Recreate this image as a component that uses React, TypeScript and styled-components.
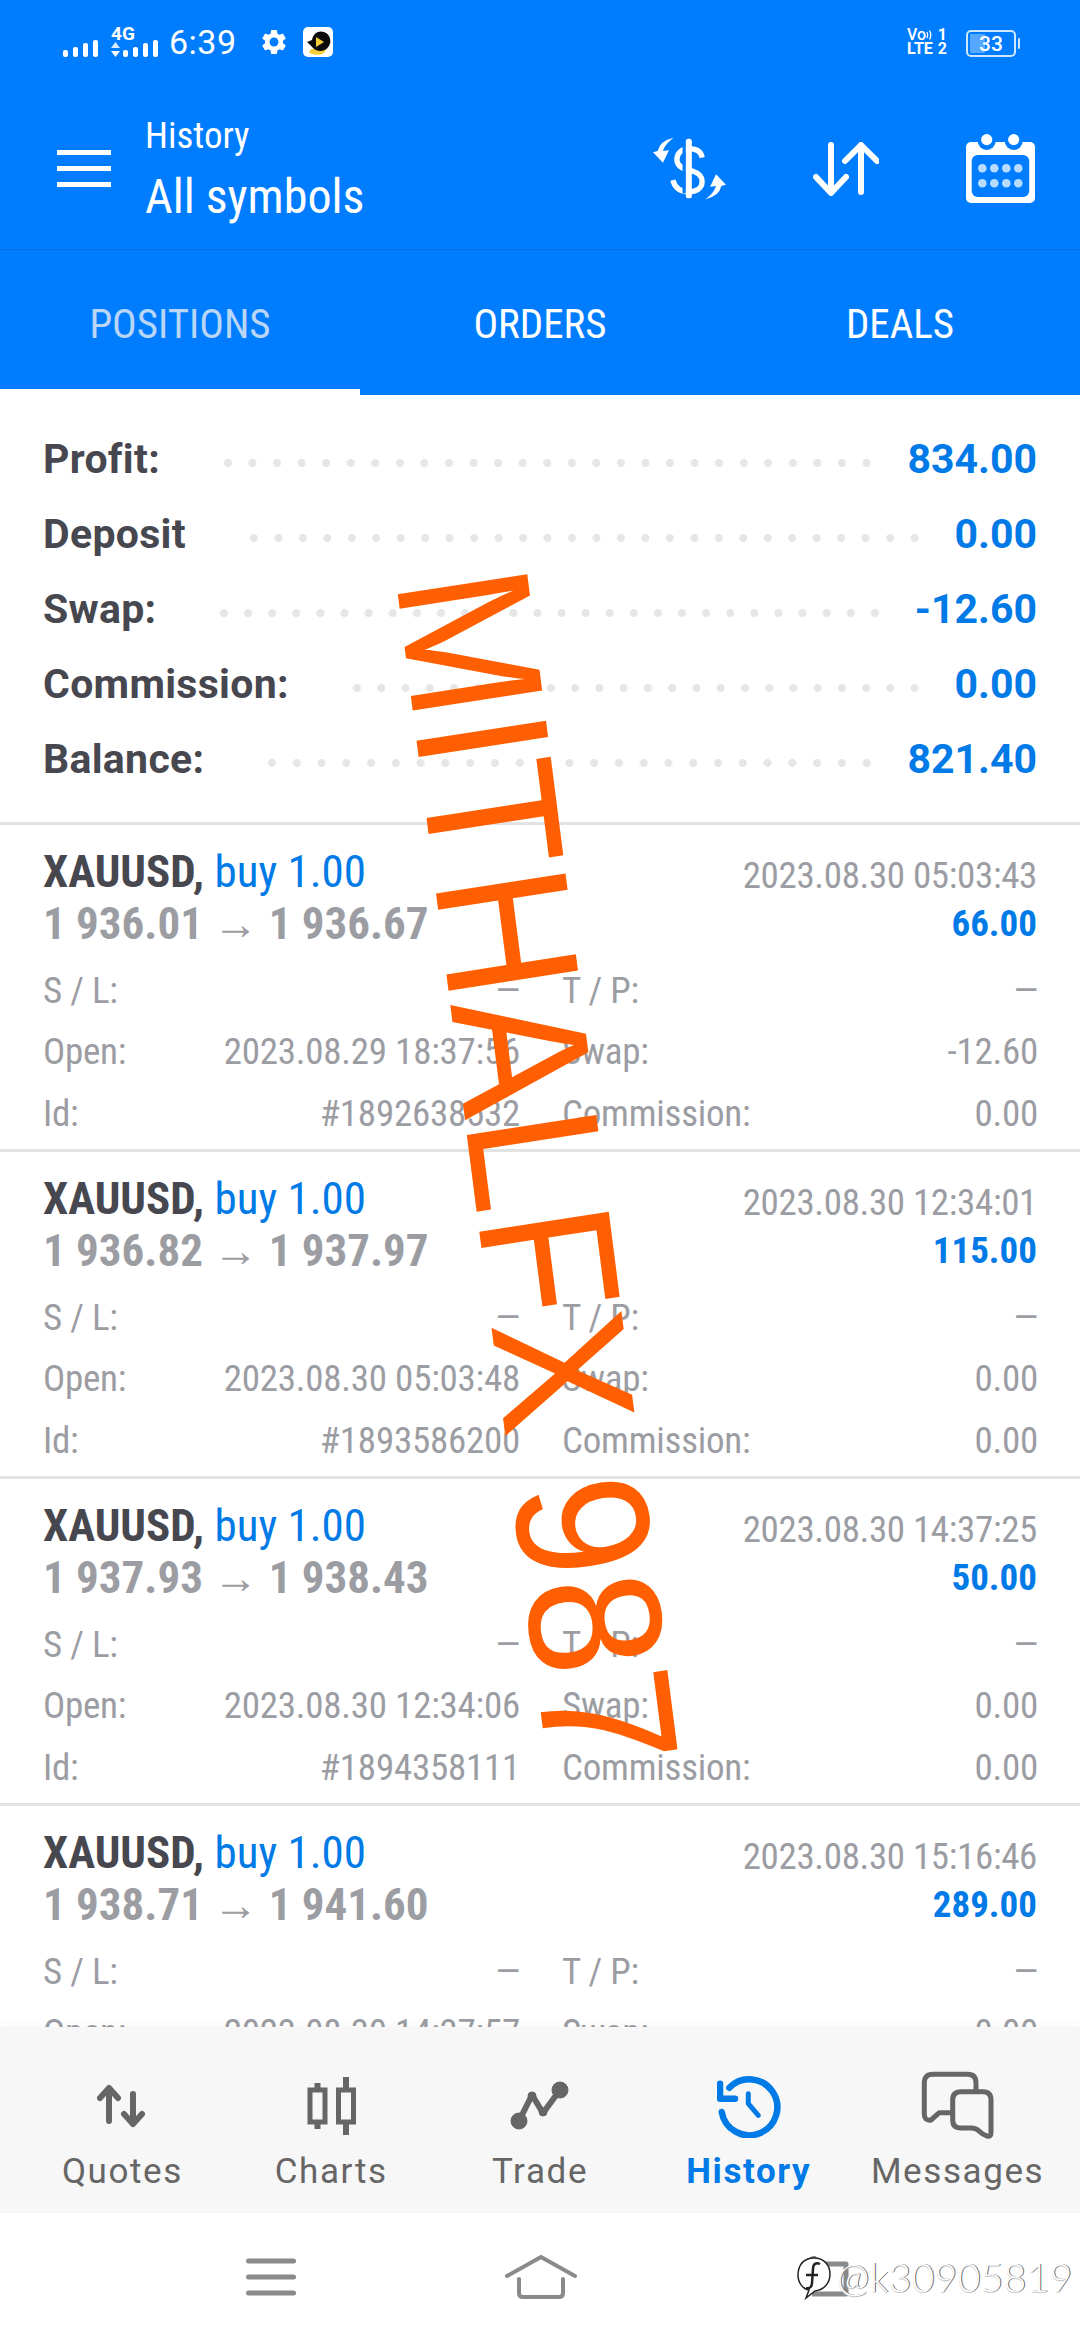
import React from "react";
import styled, { createGlobalStyle, css } from "styled-components";
import { MdSettings } from "react-icons/md";

const BLUE = "#007dff";
const VALUE_BLUE = "#007ae6";
const DARK = "#47474f";
const GREY = "#9c9da3";
const ICON_GREY = "#666666";

const GlobalStyle = createGlobalStyle`
  html, body {
    margin: 0;
    padding: 0;
    background: #fff;
  }
  body {
    font-family: Roboto, "Liberation Sans", sans-serif;
  }
`;

const condensed = css`
  font-family: "Roboto Condensed", Roboto, sans-serif;
  font-stretch: condensed;
`;

const Page = styled.div`
  position: relative;
  width: 1080px;
  height: 2340px;
  display: flex;
  flex-direction: column;
  overflow: hidden;
  background: #fff;
`;

const Header = styled.header`
  background: ${BLUE};
  color: #fff;
`;

const StatusBar = styled.div`
  height: 88px;
  padding: 27px 60px 0 63px;
  box-sizing: border-box;
  display: flex;
  justify-content: space-between;
  align-items: flex-start;
`;

const StatusGroup = styled.div`
  display: flex;
  align-items: flex-end;
  height: 30px;
`;

const NetStack = styled.div`
  display: flex;
  flex-direction: column;
  margin: 0 11px 0 13px;
`;

const NetLabel = styled.span`
  font-size: 19px;
  line-height: 13px;
  font-weight: 700;
`;

const NetBars = styled.div`
  display: flex;
  align-items: flex-end;
  gap: 3px;
`;

const Clock = styled.span`
  font-size: 34px;
  line-height: 30px;
  letter-spacing: 0.5px;
  margin-right: 24px;
`;

const Gear = styled(MdSettings)`
  margin: 0 14px 0 -2px;
`;

const Volte = styled.div`
  width: 40px;
  margin: 0 19px 1px 0;
  display: flex;
  flex-direction: column;
  font-size: 16px;
  line-height: 14px;
  font-weight: 700;
`;

const VolteLine = styled.div`
  display: flex;
  align-items: center;
  justify-content: space-between;
`;

const VolteVo = styled.span`
  display: flex;
  align-items: center;
  font-weight: 500;
`;

const Battery = styled.div`
  position: relative;
  width: 50px;
  height: 27px;
  box-sizing: border-box;
  border: 2px solid #cfe6ff;
  border-radius: 5px;
  display: flex;
  align-items: center;
  justify-content: center;
  font-size: 21px;
  font-weight: 500;
  background: linear-gradient(90deg, #55a8ff 0 36%, transparent 36%);
  background-clip: content-box;
  padding: 2px;
  margin-right: 4px;

  &::after {
    content: "";
    position: absolute;
    right: -6px;
    top: 6px;
    width: 2px;
    height: 11px;
    border-radius: 1px;
    background: #cfe6ff;
  }
`;

const Toolbar = styled.div`
  height: 162px;
  box-sizing: border-box;
  border-bottom: 1px solid #0a70e0;
  display: flex;
  align-items: center;
  padding: 0 45px 0 57px;
`;

const Burger = styled.div`
  width: 54px;
  height: 37px;
  display: flex;
  flex-direction: column;
  justify-content: space-between;
  margin-right: 34px;

  span {
    height: 5px;
    background: #fff;
  }
`;

const Titles = styled.div`
  flex: 1;
  display: flex;
  flex-direction: column;
  padding-top: 4px;
`;

const SubTitle = styled.div`
  ${condensed}
  font-size: 37px;
  line-height: 44px;
`;

const MainTitle = styled.div`
  ${condensed}
  font-size: 48px;
  line-height: 62px;
  margin-top: 8px;
`;

const ToolIcons = styled.div`
  display: flex;
  align-items: center;
  gap: 87px;
`;

const Tabs = styled.div`
  height: 145px;
  display: grid;
  grid-template-columns: repeat(3, 1fr);
`;

const TabButton = styled.div<{ $active?: boolean }>`
  ${condensed}
  display: flex;
  align-items: center;
  justify-content: center;
  box-sizing: border-box;
  padding-top: 9px;
  font-size: 41px;
  color: ${(p) => (p.$active ? "#b9d6f7" : "#fff")};
  border-bottom: 6px solid ${(p) => (p.$active ? "#fff" : "transparent")};
`;

const Content = styled.main`
  flex: 1;
  min-height: 0;
  overflow: hidden;
`;

const Summary = styled.section`
  padding: 26px 43px 26px;
  border-bottom: 3px solid #e3e3e3;
`;

const SummaryRow = styled.div`
  height: 75px;
  display: flex;
  align-items: center;
`;

const SummaryLabel = styled.span`
  font-size: 41px;
  font-weight: 700;
  letter-spacing: 0.3px;
  color: ${DARK};
`;

const Leader = styled.span`
  flex: 1;
  height: 8px;
  margin: 8px 28px 0 56px;
  background-image: radial-gradient(circle, #e6e6e6 3.8px, transparent 4.2px);
  background-size: 24px 8px;
  background-repeat: space no-repeat;
`;

const SummaryValue = styled.span`
  font-size: 41px;
  font-weight: 700;
  color: ${VALUE_BLUE};
`;

const Deal = styled.article`
  height: 327px;
  box-sizing: border-box;
  padding: 22px 43px 0;
  border-bottom: 3px solid #e3e3e3;
`;

const DealHead = styled.div`
  display: flex;
  justify-content: space-between;
`;

const PriceLine = styled(DealHead)`
  margin-top: -4px;
`;

const Symbol = styled.div`
  ${condensed}
  font-size: 45px;
  line-height: 50px;
  font-weight: 700;
  color: ${DARK};

  span {
    font-weight: 400;
    color: ${VALUE_BLUE};
  }
`;

const CloseTime = styled.div`
  ${condensed}
  font-size: 37px;
  letter-spacing: -0.35px;
  line-height: 52px;
  margin-top: 3px;
  color: ${GREY};
`;

const Prices = styled.div`
  ${condensed}
  font-size: 45px;
  line-height: 52px;
  font-weight: 700;
  color: ${GREY};
`;

const DealProfit = styled.div`
  ${condensed}
  font-size: 37px;
  line-height: 52px;
  font-weight: 700;
  color: ${VALUE_BLUE};
`;

const DealGrid = styled.div`
  display: grid;
  grid-template-columns: 477px 476px;
  column-gap: 42px;
  margin-top: 10px;
`;

const DealField = styled.div`
  ${condensed}
  height: 61.3px;
  display: flex;
  align-items: center;
  justify-content: space-between;
  font-size: 37px;
  letter-spacing: -0.25px;
  color: ${GREY};
`;

const TabBar = styled.nav`
  height: 186px;
  flex: none;
  box-sizing: border-box;
  padding: 43px 18px 0;
  display: grid;
  grid-template-columns: repeat(5, 1fr);
  background: #f7f7f7;
  box-shadow: 0 -5px 7px rgba(0, 0, 0, 0.02);
  position: relative;
`;

const TabItem = styled.div<{ $active?: boolean }>`
  display: flex;
  flex-direction: column;
  align-items: center;
  font-size: 35px;
  line-height: 44px;
  letter-spacing: 1.6px;
  font-weight: ${(p) => (p.$active ? 700 : 400)};
  color: ${(p) => (p.$active ? VALUE_BLUE : ICON_GREY)};
`;

const TabIcon = styled.div`
  height: 72px;
  display: flex;
  align-items: center;
  justify-content: center;
  margin-bottom: 8px;
`;

const NavBar = styled.div`
  height: 127px;
  flex: none;
  display: flex;
  align-items: center;
  gap: 209px;
  padding-left: 246px;
  background: #fff;
`;

const BackSlot = styled.div`
  display: flex;
  margin-left: 14px;
`;

const Stamp = styled.div`
  position: absolute;
  left: 796px;
  top: 2252px;
  display: flex;
  align-items: center;
  gap: 5px;
  font-family: Lato, Roboto, sans-serif;
  font-size: 39px;
  font-weight: 300;
  letter-spacing: 0.4px;
  line-height: 50px;
  color: #fff;
  text-shadow: 1px 0 0 #666, 0 1px 0 #ccc;
`;

const Brand = styled.div`
  position: absolute;
  left: 396px;
  top: 580px;
  line-height: 0;
  white-space: nowrap;
  font-family: "Liberation Sans", Arial, sans-serif;
  font-size: 190px;
  color: #ff5f00;
  transform-origin: 0 0;
  transform: scaleY(1.1) rotate(82deg) scaleX(0.84) translateY(-66px);
`;

const SignalBars = () => (
  <svg width="35" height="17" viewBox="0 0 35 17" fill="#fff">
    <rect x="0" y="10" width="5" height="7" rx="2" />
    <rect x="10" y="7" width="5" height="10" rx="2" />
    <rect x="20" y="3" width="5" height="14" rx="2" />
    <rect x="30" y="0" width="5" height="17" rx="2" />
  </svg>
);

const DataArrows = () => (
  <svg width="9" height="15" viewBox="0 0 9 15" fill="#fff">
    <path d="M4.5 0 9 6H0z" opacity="0.85" />
    <path d="M0 9h9l-4.5 6z" />
  </svg>
);

const VoiceWaves = () => (
  <svg width="7" height="14" viewBox="0 0 7 14" fill="none" stroke="#fff" strokeWidth="1.3">
    <path d="M1 4q1.500 3 0 6M3.500 2.500q2.500 4.500 0 9" />
  </svg>
);

const AppBadge = () => (
  <svg width="30" height="30" viewBox="0 0 30 30">
    <rect width="30" height="30" rx="5" fill="#fff" />
    <path d="M6 25c2 3 10 4 15 1l3-5-16 1z" fill="#f5cf3a" />
    <path d="M4 15 9 13C10 6 16 3 21 5c6 2 8 9 5 14-3 5-9 6-13 4-3-1-5-5-9-8z" fill="#0b0b0b" />
    <path d="M13 10v10l8-5z" fill="#f5cf3a" />
  </svg>
);

const DollarSwapIcon = () => (
  <svg width="73" height="63" viewBox="0 0 220 190" fill="#fff">
    <path d="M62 2Q20 12 14 42L0 46 30 78 48 40 30 42Q35 22 62 2z" />
    <path d="M158 188Q200 178 206 148L220 144 190 112 172 150 190 148Q185 168 158 188z" />
    <path
      d="M148 62C145 42 128 35 108 35 85 35 72 50 72 68 72 85 85 95 108 100 135 106 148 115 148 135 148 155 130 165 108 165 85 165 66 155 60 130"
      fill="none"
      stroke="#fff"
      strokeWidth="16"
    />
    <rect x="89" y="20" width="10" height="150" fill={BLUE} />
    <rect x="99" y="5" width="18" height="180" rx="8" />
  </svg>
);

const SwapArrowsIcon = () => (
  <svg width="66" height="54" viewBox="0 0 66 54" fill="none" stroke="#fff" strokeWidth="6" strokeLinecap="round" strokeLinejoin="round">
    <path d="M18 3v47M3 35l15 16 15-16" />
    <path d="M48 3v47M32 19 48 3l16 16" />
  </svg>
);

const CalendarIcon = () => (
  <svg width="69" height="69" viewBox="0 0 69 69">
    <rect x="0" y="8" width="69" height="61" rx="5" fill="#fff" />
    <circle cx="20.7" cy="7" r="9" fill={BLUE} />
    <circle cx="47.7" cy="7" r="9" fill={BLUE} />
    <circle cx="20.7" cy="5.6" r="5.6" fill="#fff" />
    <circle cx="47.7" cy="5.6" r="5.6" fill="#fff" />
    <rect x="5.7" y="21" width="57.5" height="42" rx="6" fill={BLUE} />
    {[34.3, 49.3].map((y) =>
      [16.3, 28.3, 40.3, 52.3].map((x) => <circle key={`${x}-${y}`} cx={x} cy={y} r="4.3" fill="#b8dcff" />),
    )}
  </svg>
);

const QuotesIcon = () => (
  <svg width="50" height="44" viewBox="0 0 50 44" fill="none" stroke={ICON_GREY} strokeWidth="6" strokeLinecap="round" strokeLinejoin="round">
    <path d="M12 4v33M3 14l9-10 9 10" />
    <path d="M36 10v30M27 30l9 10 9-10" />
  </svg>
);

const ChartsIcon = () => (
  <svg width="49" height="58" viewBox="0 0 49 58" fill="none" stroke={ICON_GREY}>
    <path d="M10.500 6v46M39 0v58" strokeWidth="6" />
    <rect x="3" y="13" width="15" height="32" fill="#f7f7f7" strokeWidth="5" />
    <rect x="31.500" y="13" width="15" height="32" fill="#f7f7f7" strokeWidth="5" />
  </svg>
);

const TradeIcon = () => (
  <svg width="60" height="50" viewBox="0 0 60 50" fill={ICON_GREY} stroke={ICON_GREY}>
    <path d="M9 40 22 14 33 32 50 9" fill="none" strokeWidth="6" strokeLinejoin="round" />
    <circle cx="9" cy="40" r="8" />
    <circle cx="22" cy="15" r="4" />
    <circle cx="33" cy="31" r="4" />
    <circle cx="50" cy="9" r="8" />
  </svg>
);

const HistoryIcon = () => (
  <svg width="64" height="64" viewBox="0 0 64 64" fill="none" stroke={VALUE_BLUE} strokeWidth="6.500" strokeLinecap="round" strokeLinejoin="round">
    <path d="M4.700 38A28 28 0 1 0 12.300 13.700" />
    <path d="M3 9.700v15h15" />
    <path d="M31.300 19.700v10l10 11.600" strokeWidth="5" />
  </svg>
);

const MessagesIcon = () => (
  <svg width="74" height="70" viewBox="0 0 74 70" fill="none" stroke={ICON_GREY} strokeWidth="5" strokeLinejoin="round" strokeLinecap="round">
    <path d="M55 19V12Q55 3.300 46.700 3.300H11.700Q3.300 3.300 3.300 11.700V43Q3.300 50 10 49L18.300 41.700H31.700" />
    <path d="M40 20.700H62Q70 20.700 70 29V62Q70 66 66 65 62 64 58 60 55 57 50 57H40Q31.700 57 31.700 49V29Q31.700 20.700 40 20.700Z" />
  </svg>
);

const NavMenuIcon = () => (
  <svg width="50" height="38" viewBox="0 0 50 38" fill="none" stroke="#8a8a8a" strokeWidth="5" strokeLinecap="round">
    <path d="M2.500 3h45M2.500 19h45M2.500 35h45" />
  </svg>
);

const NavHomeIcon = () => (
  <svg width="72" height="44" viewBox="0 0 72 44" fill="none" stroke="#8a8a8a" strokeWidth="4" strokeLinecap="round" strokeLinejoin="round">
    <path d="M2 21 36 2l34 19" />
    <path d="M14 24v14q0 4 4 4h36q4 0 4-4V24" />
  </svg>
);

const NavBackIcon = () => (
  <svg width="50" height="42" viewBox="0 0 50 42" fill="none" stroke="#8a8a8a" strokeWidth="5" strokeLinejoin="round">
    <path d="M3 8 14 2v12zM14 8h32v30H12" />
  </svg>
);

const StampLogo = () => (
  <svg width="36" height="48" viewBox="0 0 36 48" fill="none" stroke="#222" strokeWidth="1.500">
    <path d="M18 5C8 5 2 12 2 22c0 8 5 14 11 15l-3 8 9-7c9-1 15-8 15-17C34 12 28 5 18 5z" fill="#fff" />
    <path d="M24 11c-4-2-7 0-7 5l-1 14c0 4-3 6-6 5M10 22h12" strokeWidth="2.500" />
  </svg>
);

type Deal = {
  close: string;
  prices: [string, string];
  profit: string;
  open: string;
  swap: string;
  id: string;
};

const deals: Deal[] = [
  { close: "2023.08.30 05:03:43", prices: ["1 936.01", "1 936.67"], profit: "66.00", open: "2023.08.29 18:37:56", swap: "-12.60", id: "#1892638532" },
  { close: "2023.08.30 12:34:01", prices: ["1 936.82", "1 937.97"], profit: "115.00", open: "2023.08.30 05:03:48", swap: "0.00", id: "#1893586200" },
  { close: "2023.08.30 14:37:25", prices: ["1 937.93", "1 938.43"], profit: "50.00", open: "2023.08.30 12:34:06", swap: "0.00", id: "#1894358111" },
  { close: "2023.08.30 15:16:46", prices: ["1 938.71", "1 941.60"], profit: "289.00", open: "2023.08.30 14:37:57", swap: "0.00", id: "#1894358112" },
];

const totals = [
  ["Profit:", "834.00"],
  ["Deposit", "0.00"],
  ["Swap:", "-12.60"],
  ["Commission:", "0.00"],
  ["Balance:", "821.40"],
];

const tabItems = [
  { label: "Quotes", icon: <QuotesIcon /> },
  { label: "Charts", icon: <ChartsIcon /> },
  { label: "Trade", icon: <TradeIcon /> },
  { label: "History", icon: <HistoryIcon />, active: true },
  { label: "Messages", icon: <MessagesIcon /> },
];

const App: React.FC = () => {
  return (
    <Page>
      <GlobalStyle />
      <Header>
        <StatusBar>
          <StatusGroup>
            <SignalBars />
            <NetStack>
              <NetLabel>4G</NetLabel>
              <NetBars>
                <DataArrows />
                <SignalBars />
              </NetBars>
            </NetStack>
            <Clock>6:39</Clock>
            <Gear size={30} />
            <AppBadge />
          </StatusGroup>
          <StatusGroup>
            <Volte>
              <VolteLine>
                <VolteVo>
                  Vo
                  <VoiceWaves />
                </VolteVo>
                <span>1</span>
              </VolteLine>
              <VolteLine>
                <span>LTE</span>
                <span>2</span>
              </VolteLine>
            </Volte>
            <Battery>33</Battery>
          </StatusGroup>
        </StatusBar>
        <Toolbar>
          <Burger>
            <span />
            <span />
            <span />
          </Burger>
          <Titles>
            <SubTitle>History</SubTitle>
            <MainTitle>All symbols</MainTitle>
          </Titles>
          <ToolIcons>
            <DollarSwapIcon />
            <SwapArrowsIcon />
            <CalendarIcon />
          </ToolIcons>
        </Toolbar>
        <Tabs>
          <TabButton $active>POSITIONS</TabButton>
          <TabButton>ORDERS</TabButton>
          <TabButton>DEALS</TabButton>
        </Tabs>
      </Header>

      <Content>
        <Summary>
          {totals.map(([label, value]) => (
            <SummaryRow key={label}>
              <SummaryLabel>{label}</SummaryLabel>
              <Leader />
              <SummaryValue>{value}</SummaryValue>
            </SummaryRow>
          ))}
        </Summary>

        {deals.map((deal) => (
          <Deal key={deal.id}>
            <DealHead>
              <Symbol>
                XAUUSD, <span>buy 1.00</span>
              </Symbol>
              <CloseTime>{deal.close}</CloseTime>
            </DealHead>
            <PriceLine>
              <Prices>
                {deal.prices[0]} → {deal.prices[1]}
              </Prices>
              <DealProfit>{deal.profit}</DealProfit>
            </PriceLine>
            <DealGrid>
              <DealField>
                <span>S / L:</span>
                <span>—</span>
              </DealField>
              <DealField>
                <span>T / P:</span>
                <span>—</span>
              </DealField>
              <DealField>
                <span>Open:</span>
                <span>{deal.open}</span>
              </DealField>
              <DealField>
                <span>Swap:</span>
                <span>{deal.swap}</span>
              </DealField>
              <DealField>
                <span>Id:</span>
                <span>{deal.id}</span>
              </DealField>
              <DealField>
                <span>Commission:</span>
                <span>0.00</span>
              </DealField>
            </DealGrid>
          </Deal>
        ))}
      </Content>

      <TabBar>
        {tabItems.map((item) => (
          <TabItem key={item.label} $active={item.active}>
            <TabIcon>{item.icon}</TabIcon>
            {item.label}
          </TabItem>
        ))}
      </TabBar>

      <NavBar>
        <NavMenuIcon />
        <NavHomeIcon />
        <BackSlot>
          <NavBackIcon />
        </BackSlot>
      </NavBar>

      <Brand>MITHALFX 987</Brand>
      <Stamp>
        <StampLogo />
        @k30905819
      </Stamp>
    </Page>
  );
};

export default App;
